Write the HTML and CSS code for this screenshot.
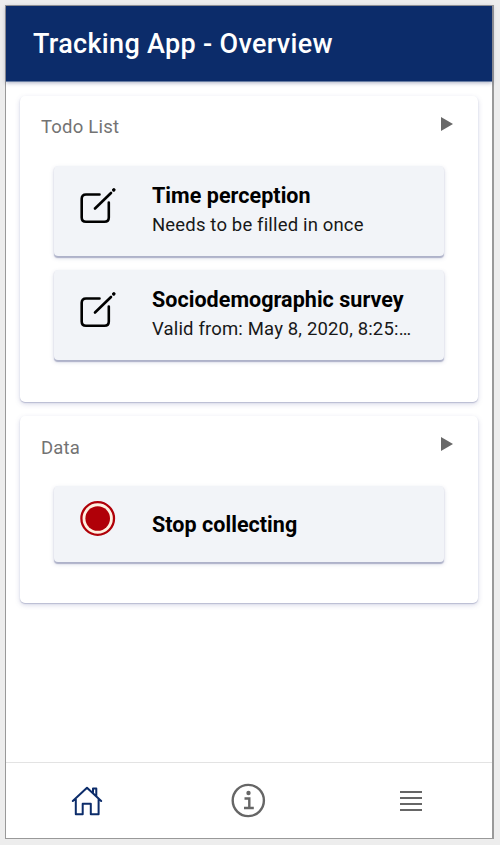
FILE: index.html
```
<!DOCTYPE html>
<html lang="en">
<head>
<meta charset="utf-8">
<title>Tracking App - Overview</title>
<link rel="stylesheet" href="styles.css">
</head>
<body>
<div class="app">
  <header class="header"><h1 class="title">Tracking App - Overview</h1></header>
  <main class="content">
    <section class="card">
      <div class="card-head">
        <h2 class="card-title">Todo List</h2>
        <svg class="arrow" viewBox="0 0 12 14"><path d="M0 0L12 7L0 14Z"/></svg>
      </div>
      <div class="item">
        <svg class="item-icon" viewBox="0 0 36 36"><g class="pen"><path d="M19.500 6.500H6Q1.700 6.500 1.700 10.800V29.500Q1.700 33.800 6 33.800H24.500Q28.800 33.800 28.800 29.500V14.500"/><path d="M15 20.500L31 5"/><path class="tip" d="M33.700 2L33.900 1.800"/></g></svg>
        <div class="item-text">
          <h3 class="item-title">Time perception</h3>
          <p class="item-sub">Needs to be filled in once</p>
        </div>
      </div>
      <div class="item">
        <svg class="item-icon" viewBox="0 0 36 36"><g class="pen"><path d="M19.500 6.500H6Q1.700 6.500 1.700 10.800V29.500Q1.700 33.800 6 33.800H24.500Q28.800 33.800 28.800 29.500V14.500"/><path d="M15 20.500L31 5"/><path class="tip" d="M33.700 2L33.900 1.800"/></g></svg>
        <div class="item-text">
          <h3 class="item-title">Sociodemographic survey</h3>
          <p class="item-sub">Valid from: May 8, 2020, 8:25:…</p>
        </div>
      </div>
    </section>
    <section class="card card-data">
      <div class="card-head">
        <h2 class="card-title">Data</h2>
        <svg class="arrow" viewBox="0 0 12 14"><path d="M0 0L12 7L0 14Z"/></svg>
      </div>
      <div class="item item-single">
        <svg class="item-icon" viewBox="0 0 36 36"><circle class="halo" cx="17.700" cy="18.500" r="15.500"/><circle class="ring" cx="17.700" cy="18.500" r="16.300"/><circle class="dot" cx="17.700" cy="18.500" r="12.300"/></svg>
        <div class="item-text">
          <h3 class="item-title">Stop collecting</h3>
        </div>
      </div>
    </section>
  </main>
  <nav class="tabs">
    <a class="tab tab-home"><svg class="tab-icon" viewBox="0 0 36 36"><path d="M3.800 18L18 4.800L32.200 18M6.800 16V31.300H13.700V20.800H21.800V31.300H29.600V16M24 9.500V5.500H27.300V13"/></svg></a>
    <a class="tab tab-info"><svg class="tab-icon" viewBox="0 0 36 36"><circle cx="17.300" cy="17.500" r="15.600"/><path class="serif" d="M13.500 15.500H18.300V25M13 25H22.800"/><circle class="point" cx="17.500" cy="10" r="2.200"/></svg></a>
    <a class="tab tab-menu"><svg class="tab-icon" viewBox="0 0 36 36"><path d="M7 9H29M7 15H29M7 21H29M7 27H29"/></svg></a>
  </nav>
</div>
</body>
</html>
```
FILE: styles.css
```
* { box-sizing: border-box; }
body {
  margin: 0;
  padding: 5px;
  height: 845px;
  background: #ededed;
  font-family: Roboto, sans-serif;
  overflow: hidden;
}
h1, h2, h3, p { margin: 0; white-space: nowrap; }
svg { display: block; flex: none; }
.app {
  width: 489px;
  height: 834px;
  display: flex;
  flex-direction: column;
  background: #fff;
  border: 1px solid #999;
  border-right-width: 2px;
}
.header {
  height: 76px;
  flex: none;
  display: flex;
  align-items: center;
  padding-left: 27px;
  background: #0c2c6a;
  border-bottom: 1px solid #687da3;
  box-shadow: 0 1px 4px rgba(40, 50, 100, .38);
}
.title { color: #fff; font-size: 27px; font-weight: 500; line-height: 32px; letter-spacing: .31px; }
.content { flex: 1; padding: 14px 14px 0; }
.card {
  height: 306px;
  padding: 0 34px;
  border-radius: 5px;
  background: #fff;
  box-shadow: 0 1px 1px #babdd2, 0 2px 5px rgba(90, 95, 160, .25);
}
.card-data { height: 187px; margin-top: 14px; }
.card-head {
  height: 70px;
  margin: 0 -9px 0 -13px;
  padding-top: 20px;
  display: flex;
  justify-content: space-between;
}
.card-title { color: #737373; font-size: 18.500px; font-weight: 400; line-height: 22px; letter-spacing: .2px; }
.card-data .card-title { padding-top: .5px; }
.arrow { width: 12px; height: 14px; margin-top: 1px; fill: #686868; }
.item {
  height: 90px;
  display: flex;
  align-items: flex-start;
  padding: 18px 0 0 26px;
  border-radius: 4px;
  background: #f2f4f8;
  box-shadow: 0 1.500px 1px #aeb2c9, 0 2px 4px rgba(90, 95, 150, .25);
}
.item + .item { margin-top: 14px; }
.item-icon { width: 36px; height: 36px; margin: 4px 36px 0 0; }
.item-title { color: #000; font-size: 21.500px; font-weight: 700; line-height: 24px; letter-spacing: .04px; }
.item-sub { color: #181818; font-size: 18.500px; line-height: 22px; margin-top: 6px; letter-spacing: .16px; }
.item-single { height: 76px; padding-top: 15px; }
.item-single .item-icon { margin-top: -1px; }
.item-single .item-text { padding-top: 12px; }
.pen { fill: none; stroke: #000; stroke-width: 2.600; stroke-linecap: round; }
.pen .tip { stroke-width: 3.300; }
.ring { fill: none; stroke: #b00008; stroke-width: 2.300; }
.halo { fill: #fff0e0; }
.dot { fill: #b00008; }
.tabs { flex: none; height: 76px; display: grid; grid-template-columns: repeat(3, 1fr); border-top: 1px solid #e3e3e3; }
.tab { display: flex; justify-content: center; align-items: center; }
.tab-icon { width: 36px; height: 36px; fill: none; stroke: #666; stroke-width: 2; }
.tab-home .tab-icon { stroke: #0c2c6a; stroke-linecap: round; stroke-linejoin: round; }
.tab-info .tab-icon { stroke-width: 2.400; }
.tab .point { fill: #666; stroke: none; }
```
